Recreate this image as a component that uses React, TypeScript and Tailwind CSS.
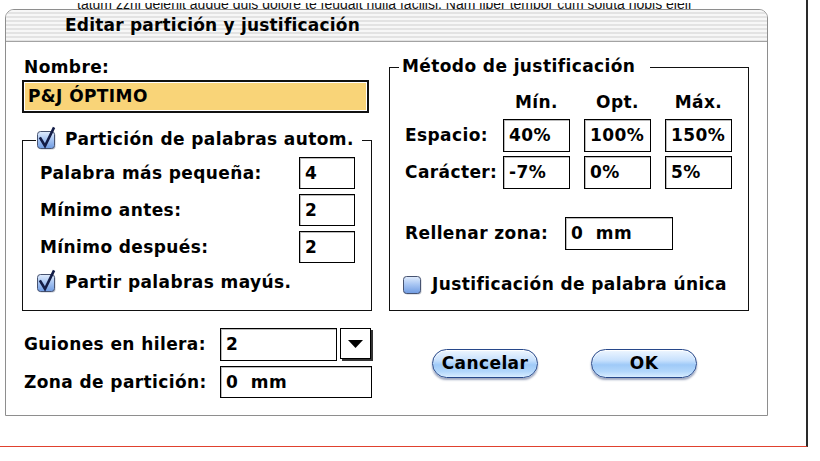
import React from "react";

function Check({ checked, id }: { checked: boolean; id: string }) {
  return (
    <svg width="20" height="26" viewBox="0 0 20 26" className="shrink-0 overflow-visible">
      <defs>
        <linearGradient id={id} x1="0" y1="0" x2="0" y2="1">
          <stop offset="0" stopColor="#e2edfd" />
          <stop offset="0.45" stopColor="#aac7f3" />
          <stop offset="1" stopColor="#6f9be2" />
        </linearGradient>
      </defs>
      <rect x="2.5" y="5.5" width="17" height="17" rx="3" fill="#8d96a8" opacity="0.5" />
      <rect x="1.5" y="4.5" width="17" height="17" rx="3" fill={`url(#${id})`} stroke="#475370" strokeWidth="1" />
      {checked && (
        <path d="M4.5 11.5 L9 19 L17.5 1.5" fill="none" stroke="#131c46" strokeWidth="2.6" strokeLinejoin="miter" strokeLinecap="square" />
      )}
    </svg>
  );
}

function Field({ value, className }: { value: string; className: string }) {
  return (
    <div className={`flex items-center border border-black bg-white pl-[5px] whitespace-pre shadow-[inset_1px_1px_0_#bbb] ${className}`}>
      {value}
    </div>
  );
}

function AquaButton({ label }: { label: string }) {
  return (
    <div className="flex h-[29px] w-[106px] items-center justify-center rounded-full border border-[#27488a] bg-[linear-gradient(180deg,#eef6ff_0%,#c8e1fd_38%,#9fcaf8_55%,#b3d7fb_80%,#d8edff_100%)] shadow-[0_2px_2px_rgba(40,60,110,0.45),inset_0_1px_1px_#fff]">
      {label}
    </div>
  );
}

export default function App() {
  return (
    <div className="h-[461px] w-[820px] overflow-hidden bg-white text-[17px] font-bold leading-[21px] tracking-[0.4px] text-black font-['DejaVu_Sans',sans-serif]">
      <div className="flex h-[447px] w-[808px] flex-col border-r-2 border-b border-r-[#2a2a2a] border-b-[#e0412e]">
        <div className="h-[9px] pt-[3px] pl-[77px]">
          <div className="h-[6px] overflow-hidden">
            <div className="-mt-[7px] whitespace-nowrap text-[14px] font-normal leading-[16px] tracking-normal text-[#111] font-['Liberation_Sans',sans-serif]">
              tatum zzril delenit augue duis dolore te feugait nulla facilisi. Nam liber tempor cum soluta nobis eleif
            </div>
          </div>
        </div>
        <div className="ml-[5px] flex h-[407px] w-[763px] flex-col overflow-hidden rounded-t-[9px] border border-[#8e8e8e] bg-white">
          <div className="flex h-[32px] shrink-0 items-center border-b border-[#a3a3a3] bg-[repeating-linear-gradient(to_bottom,#f7f7f7_0px,#f7f7f7_2px,#e3e3e3_2px,#e3e3e3_4px)] pl-[59px] tracking-[0.2px]">
            Editar partición y justificación
          </div>
          <div className="flex gap-[16px] pl-[16px]">
            {/* Left column */}
            <div className="flex w-[351px] flex-col pt-[15px]">
              <div className="h-[21px] pl-[2px]">Nombre:</div>
              <div className="mt-[2px] flex h-[33px] w-[347px] items-center border-2 border-[#111] bg-[#f9d478] pl-[4px] shadow-[inset_0_0_0_1px_#fff]">
                P&amp;J ÓPTIMO
              </div>
              <fieldset className="mt-[16px] w-[350px] border border-[#111] pb-[16px]">
                <legend className="ml-[13px] h-[22px] w-[326px]">
                  <div className="flex h-[22px] items-center gap-[9px]">
                    <Check checked id="c1" />
                    <span className="-mt-[2px] whitespace-nowrap">Partición de palabras autom.</span>
                  </div>
                </legend>
                <div className="flex flex-col gap-[5px] pl-[17px] pr-[16px] pt-[6px]">
                  <div className="flex h-[32px] items-center justify-between">
                    <span>Palabra más pequeña:</span>
                    <Field value="4" className="h-[32px] w-[56px]" />
                  </div>
                  <div className="flex h-[32px] items-center justify-between">
                    <span>Mínimo antes:</span>
                    <Field value="2" className="h-[32px] w-[56px]" />
                  </div>
                  <div className="flex h-[32px] items-center justify-between">
                    <span>Mínimo después:</span>
                    <Field value="2" className="h-[32px] w-[56px]" />
                  </div>
                </div>
                <div className="mt-[9px] flex h-[22px] items-center gap-[9px] pl-[13px]">
                  <Check checked id="c2" />
                  <span className="-mt-[2px]">Partir palabras mayús.</span>
                </div>
              </fieldset>
              <div className="mt-[17px] flex h-[33px] items-center pl-[2px]">
                <span className="w-[196px]">Guiones en hilera:</span>
                <Field value="2" className="h-[33px] w-[117px]" />
                <div className="ml-[3px] flex h-[31px] w-[31px] items-center justify-center self-start border border-black bg-white shadow-[2px_2px_0_#333]">
                  <svg width="15" height="8" viewBox="0 0 15 8">
                    <path d="M0 0 H15 L7.5 8 Z" fill="#000" />
                  </svg>
                </div>
              </div>
              <div className="mt-[5px] flex h-[32px] items-center pl-[2px]">
                <span className="w-[196px]">Zona de partición:</span>
                <Field value="0  mm" className="h-[32px] w-[152px]" />
              </div>
            </div>

            {/* Right column */}
            <div className="flex w-[361px] flex-col pt-[14px]">
              <fieldset className="w-[360px] border border-[#111] pb-[14px]">
                <legend className="ml-[9px] h-[22px] w-[251px] pl-[3px]">
                  <div className="flex h-[22px] items-center">
                    <span className="-mt-[1px] whitespace-nowrap">Método de justificación</span>
                  </div>
                </legend>
                <div className="pl-[15px] pt-[14px]">
                  <div className="grid grid-cols-[84px_67px_67px_67px] gap-x-[14px]">
                    <div className="h-[21px]" />
                    <div className="text-center">Mín.</div>
                    <div className="text-center">Opt.</div>
                    <div className="text-center">Máx.</div>
                  </div>
                  <div className="mt-[6px] grid grid-cols-[84px_67px_67px_67px] items-center gap-x-[14px]">
                    <span className="whitespace-nowrap">Espacio:</span>
                    <Field value="40%" className="h-[33px]" />
                    <Field value="100%" className="h-[33px]" />
                    <Field value="150%" className="h-[33px]" />
                  </div>
                  <div className="mt-[4px] grid grid-cols-[84px_67px_67px_67px] items-center gap-x-[14px]">
                    <span className="whitespace-nowrap">Carácter:</span>
                    <Field value="-7%" className="h-[33px]" />
                    <Field value="0%" className="h-[33px]" />
                    <Field value="5%" className="h-[33px]" />
                  </div>
                  <div className="mt-[28px] flex h-[33px] items-center">
                    <span className="w-[160px]">Rellenar zona:</span>
                    <Field value="0  mm" className="h-[33px] w-[108px]" />
                  </div>
                  <div className="-ml-[3px] mt-[24px] flex h-[22px] items-center gap-[10px]">
                    <Check checked={false} id="c3" />
                    <span className="-mt-[2px] whitespace-nowrap">Justificación de palabra única</span>
                  </div>
                </div>
              </fieldset>
              <div className="ml-[43px] mt-[38px] flex gap-[53px]">
                <AquaButton label="Cancelar" />
                <AquaButton label="OK" />
              </div>
            </div>
          </div>
        </div>
      </div>
    </div>
  );
}
